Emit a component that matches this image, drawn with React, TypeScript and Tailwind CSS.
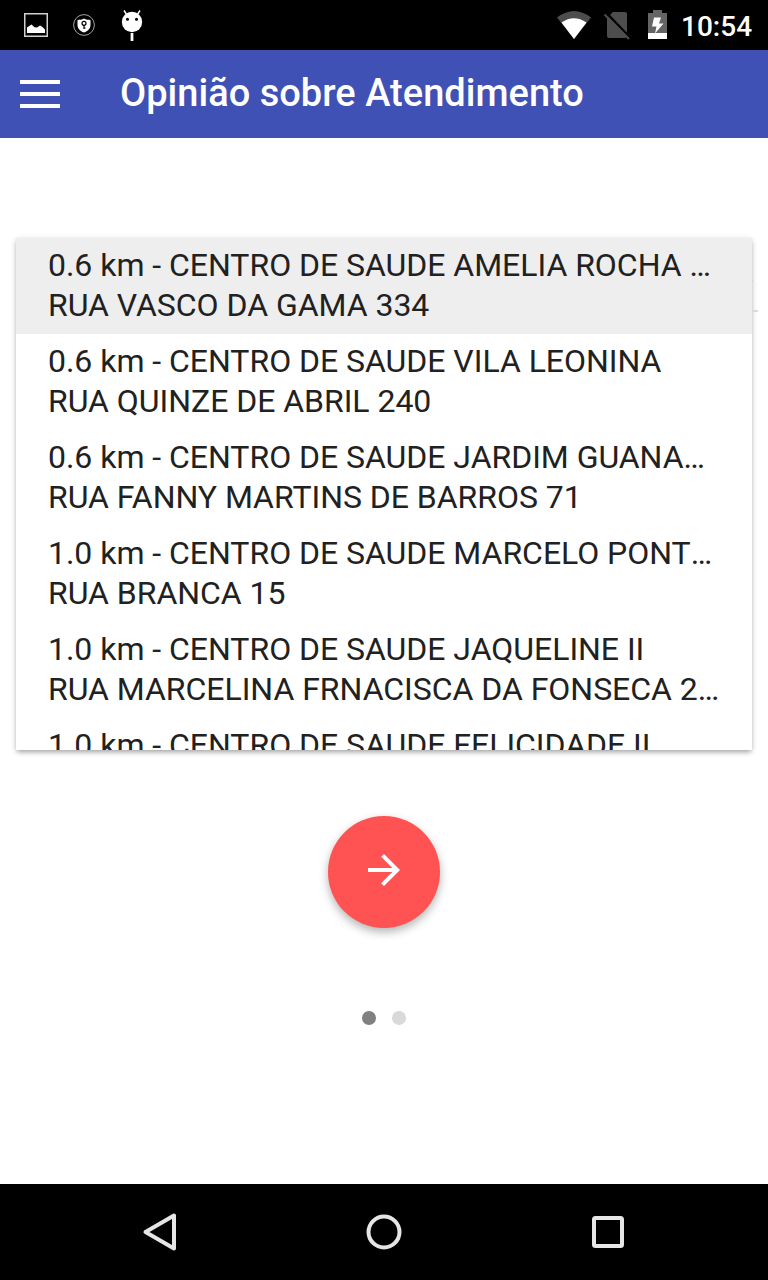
import React from "react";

const places = [
  ["0.6 km - CENTRO DE SAUDE AMELIA ROCHA DE MELO", "RUA VASCO DA GAMA 334"],
  ["0.6 km - CENTRO DE SAUDE VILA LEONINA", "RUA QUINZE DE ABRIL 240"],
  ["0.6 km - CENTRO DE SAUDE JARDIM GUANABARA", "RUA FANNY MARTINS DE BARROS 71"],
  ["1.0 km - CENTRO DE SAUDE MARCELO PONTEL GOMES", "RUA BRANCA 15"],
  ["1.0 km - CENTRO DE SAUDE JAQUELINE II", "RUA MARCELINA FRNACISCA DA FONSECA 215"],
  ["1.0 km - CENTRO DE SAUDE FELICIDADE II", "RUA TENENTE 120"],
];

function StatusBar() {
  return (
    <div className="flex h-[50px] shrink-0 items-center justify-between bg-black">
      <svg width="160" height="50" viewBox="0 0 160 50">
        <rect x="24.75" y="13.75" width="22.5" height="22.5" fill="none" stroke="#d0d0d0" strokeWidth="1.5" />
        <path d="M27 33V27.500l3-2 1.500-1 3 2.700 2.500 .3 3-2 2.500 1.500 2.500 2.500V33z" fill="#fff" />
        <circle cx="84" cy="25" r="10.4" fill="none" stroke="#a0a0a0" strokeWidth="1" />
        <path d="M84 18.5c2.2 1.2 4 1.4 6.5 1.4v5c0 3.7-2.6 6-6.5 7.5-3.900-1.500-6.500-3.800-6.500-7.500v-5c2.500 0 4.300-.2 6.500-1.400z" fill="#fff" />
        <circle cx="84" cy="23.300" r="2" fill="none" stroke="#000" strokeWidth="1.200" />
        <path d="M84 25v4M84 28h1.500" stroke="#000" strokeWidth="1.200" />
        <circle cx="132" cy="22" r="10.200" fill="#fff" />
        <path d="M127 15l-3-4.500M137 15l3-4.500" stroke="#fff" strokeWidth="1.500" />
        <path d="M132 33v8" stroke="#fff" strokeWidth="2.800" />
        <circle cx="127.500" cy="19.300" r="1.500" fill="#000" />
        <circle cx="136.500" cy="19.300" r="1.500" fill="#000" />
      </svg>
      <div className="flex items-center">
        <svg width="131" height="50" viewBox="550 0 131 50">
          <path d="M557 17.500Q574 4.500 591 17.500L574 39z" fill="#4d4d4d" />
          <path d="M561.500 22.500Q574 14 586.500 22.500L574 39z" fill="#fff" />
          <path d="M613 12h12q2 0 2 2v22q0 2-2 2h-16q-2 0-2-2V18z" fill="#4d4d4d" />
          <path d="M606.500 13l24 25" stroke="#000" strokeWidth="2.500" />
          <path d="M604.500 14.500l24.500 24.500" stroke="#4d4d4d" strokeWidth="2.200" />
          <path d="M648 13h5v-3h9v3h5v26h-19z" fill="#656565" />
          <path d="M648 33h19v6h-19z" fill="#fff" />
          <path d="M654 17.500h7l-2 6h4.500l-8.500 10 1.500-7h-4.500z" fill="#fff" />
        </svg>
        <span className="mr-4 w-[71px] whitespace-nowrap pt-[4px] text-[28px] font-medium leading-8 text-white">10:54</span>
      </div>
    </div>
  );
}

function Header() {
  return (
    <header className="flex h-[88px] shrink-0 items-center bg-[#3f51b5] pl-5">
      <button aria-label="Menu" className="flex w-10 flex-col gap-2">
        <span className="h-1 bg-white" />
        <span className="h-1 bg-white" />
        <span className="h-1 bg-white" />
      </button>
      <h1 className="ml-[60px] whitespace-nowrap pb-[2px] text-[38px] font-medium leading-[44px] tracking-[0.02px] text-white">
        Opinião sobre Atendimento
      </h1>
    </header>
  );
}

function Suggestions() {
  return (
    <div className="relative mx-4 mt-[100px] h-[512px] shrink-0">
      <ul className="h-full overflow-hidden bg-white shadow-[0_3px_5px_-1px_rgba(0,0,0,0.3),0_1px_6px_rgba(0,0,0,0.12)]">
        {places.map(([name, street], i) => (
          <li
            key={name}
            className={`h-24 pl-8 pr-[30px] pt-[7px] text-[32px] leading-10 tracking-[-0.03px] text-[#212121] ${i === 0 ? "bg-[#eeeeee]" : ""}`}
          >
            <div className="truncate">{name}</div>
            <div className="truncate">{street}</div>
          </li>
        ))}
      </ul>
      <div className="absolute left-full top-[42px] size-px bg-[#cfcfcf]" />
      <div className="absolute left-full top-[72px] h-[2px] w-[6px] bg-[#dadada]" />
    </div>
  );
}

function NavigationBar() {
  return (
    <nav className="mt-auto flex h-24 shrink-0 items-center justify-between bg-black px-[136px]">
      <svg width="48" height="48" viewBox="136 1208 48 48" fill="none" stroke="#e6e6e6" strokeWidth="4" strokeLinejoin="round">
        <path d="M174 1215.500v33L145.500 1232z" />
      </svg>
      <svg width="48" height="48" viewBox="0 0 48 48" fill="none" stroke="#e6e6e6" strokeWidth="4">
        <circle cx="24" cy="24" r="15.500" />
      </svg>
      <svg width="48" height="48" viewBox="0 0 48 48" fill="none" stroke="#e6e6e6" strokeWidth="4">
        <rect x="10" y="10" width="28" height="28" rx="1.500" />
      </svg>
    </nav>
  );
}

export default function App() {
  return (
    <div className="flex h-[1280px] w-[768px] flex-col overflow-hidden bg-white font-['Roboto',sans-serif]">
      <StatusBar />
      <Header />
      <Suggestions />
      <button
        aria-label="Avançar"
        className="mt-[66px] flex size-28 shrink-0 justify-center self-center rounded-full bg-[#ff5252] pt-[30px] shadow-[0_4px_10px_rgba(0,0,0,0.3)]"
      >
        <svg width="48" height="48" viewBox="0 0 24 24" fill="#fff">
          <path d="M12 4l-1.410 1.410L16.170 11H4v2h12.170l-5.580 5.590L12 20l8-8z" />
        </svg>
      </button>
      <div className="mt-[83px] flex shrink-0 justify-center gap-4">
        <span className="size-[14px] rounded-full bg-[#808080]" />
        <span className="size-[14px] rounded-full bg-[#d9d9d9]" />
      </div>
      <NavigationBar />
    </div>
  );
}
